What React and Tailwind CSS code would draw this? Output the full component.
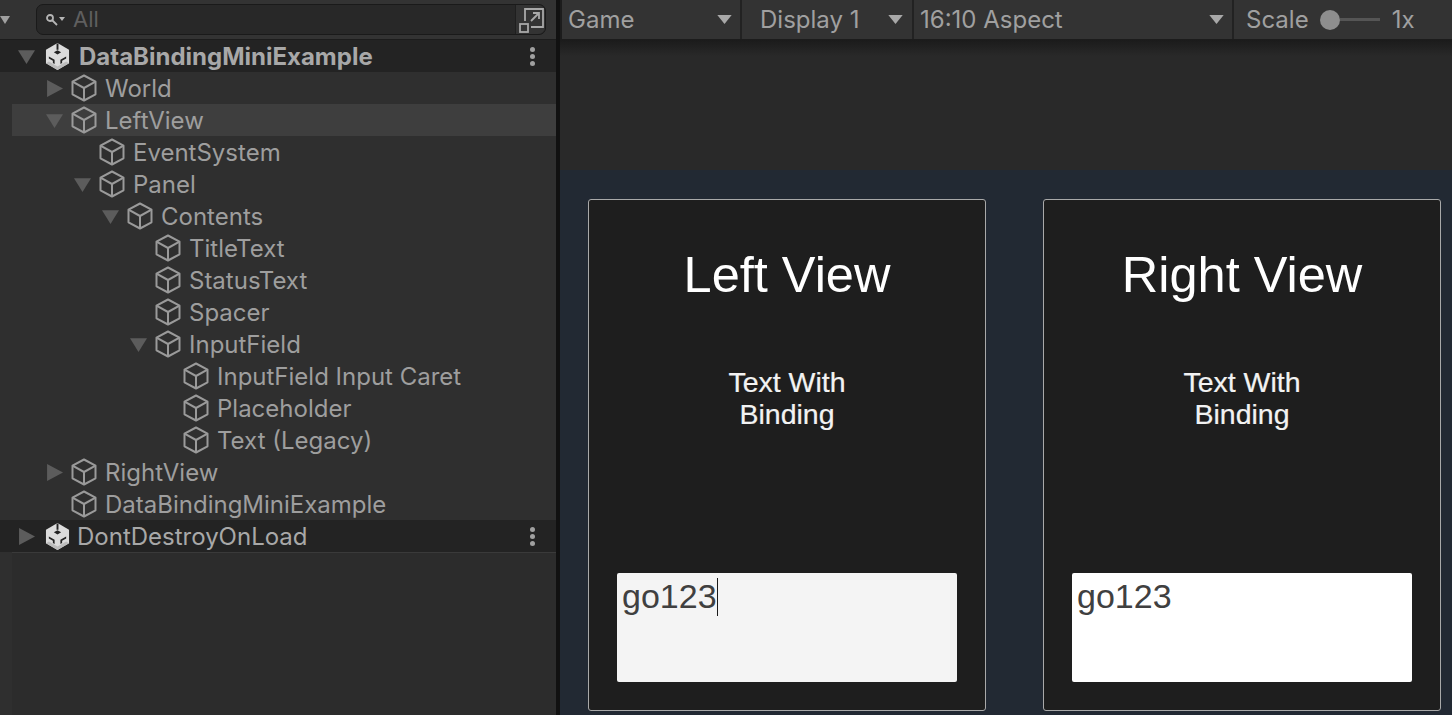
const rows = [
  { name: 'World', depth: 1, arrow: 'right' },
  { name: 'LeftView', depth: 1, arrow: 'down', active: true },
  { name: 'EventSystem', depth: 2 },
  { name: 'Panel', depth: 2, arrow: 'down' },
  { name: 'Contents', depth: 3, arrow: 'down' },
  { name: 'TitleText', depth: 4 },
  { name: 'StatusText', depth: 4 },
  { name: 'Spacer', depth: 4 },
  { name: 'InputField', depth: 4, arrow: 'down' },
  { name: 'InputField Input Caret', depth: 5 },
  { name: 'Placeholder', depth: 5 },
  { name: 'Text (Legacy)', depth: 5 },
  { name: 'RightView', depth: 1, arrow: 'right' },
  { name: 'DataBindingMiniExample', depth: 1 },
];

const Arrow = ({ dir }) => (
  <svg viewBox="0 0 16 16" className="w-[17px] h-[17px] shrink-0" fill="#5c5c5c">
    {dir === 'down' ? <path d="M0 2h16L8 15z" /> : <path d="M1 0l15 8-15 8z" />}
  </svg>
);

const Cube = () => (
  <svg viewBox="0 0 26 28" className="w-[26px] h-[28px] shrink-0" fill="none" stroke="#9a9a9a" strokeWidth="2" strokeLinejoin="round">
    <path d="M13 1.5l11.5 6.2v12.6L13 26.5 1.5 20.3V7.7z" />
    <path d="M1.5 7.7L13 14l11.5-6.3M13 14v12.5" />
  </svg>
);

const UnityLogo = () => (
  <svg viewBox="0 0 26 28" className="w-[25px] h-[27px] shrink-0">
    <path fill="#dcdcdc" d="M13 0l12 7v14l-12 7-12-7V7z" />
    <path fill="#bcbcbc" d="M1 21l12 7 12-7-3-1.8-9 5.2-9-5.2z" />
    <path fill="#232323" d="M13 7.5l3.8 2.2L13 12 9.2 9.7zM4 14l6 3.5v4.3l-1.8-1v-2.4L4 16zM22 14l-6 3.5v4.3l1.8-1v-2.4L22 16z" />
    <path fill="#232323" d="M12 0.5h2v6.5h-2z" />
  </svg>
);

const Kebab = () => (
  <div className="ml-auto mr-[21px] flex flex-col gap-[2px]">
    <span className="w-[5px] h-[5px] rounded-full bg-[#a0a0a0]" />
    <span className="w-[5px] h-[5px] rounded-full bg-[#a0a0a0]" />
    <span className="w-[5px] h-[5px] rounded-full bg-[#a0a0a0]" />
  </div>
);

const Caret = () => (
  <svg viewBox="0 0 16 10" className="w-[15px] h-[9px] shrink-0" fill="#a8a8a8">
    <path d="M0 0h16L8 10z" />
  </svg>
);

const SceneRow = ({ name, dir, bold }) => (
  <div className="h-[32px] flex items-center bg-[#232323] pl-[18px]">
    <div className="w-[27px] shrink-0"><Arrow dir={dir} /></div>
    <UnityLogo />
    <span className={`${bold ? 'ml-[9px] font-bold' : 'ml-[7px]'} pt-[1px] text-[24px] text-[#a8a8a8]`}>{name}</span>
    <Kebab />
  </div>
);

const TreeRow = ({ name, depth, arrow, active }) => (
  <div className={`h-[32px] flex items-center ml-[12px] ${active ? 'bg-[#3e3e3e]' : ''}`}>
    <div className="flex items-center w-[25px] shrink-0" style={{ marginLeft: depth * 28 + 6 }}>
      {arrow && <Arrow dir={arrow} />}
    </div>
    <Cube />
    <span className="ml-[8px] pt-[1px] text-[24px] text-[#9e9e9e] whitespace-nowrap">{name}</span>
  </div>
);

const GameCard = ({ title, caret, inputBg }) => (
  <div className="w-[398px] h-[512px] shrink-0 border border-[#a9a9a9] rounded-[3px] bg-[#1e1e1e] flex flex-col items-center px-[28px] pb-[28px] pt-[45px] font-['Liberation_Sans',sans-serif] text-white">
    <div className="text-[50.5px] leading-[60px]">{title}</div>
    <div className="mt-[61px] text-[28.5px] leading-[32px] text-center text-[#f2f2f2] [-webkit-text-stroke:0.2px_white]">
      Text With<br />Binding
    </div>
    <div className={`mt-auto w-full h-[109px] rounded-[2px] ${inputBg} px-[5px] text-[34px] leading-[46px] text-[#404040] flex items-start`}>
      <span>go123</span>
      {caret && <span className="w-[1px] h-[38px] mt-[5px] bg-[#1a1a1a]" />}
    </div>
  </div>
);

export default function App() {
  return (
    <div className="w-[1452px] h-[715px] overflow-hidden flex bg-[#2a2a2a] font-['Inter',sans-serif]">
      {/* hierarchy */}
      <div className="w-[556px] shrink-0 flex flex-col bg-[#2f2f2f]">
        <div className="h-[40px] shrink-0 flex items-center bg-[#333333] border-b border-[#1c1c1c]">
          <div className="w-[36px] shrink-0"><svg viewBox="0 0 10 8" className="w-[10px] h-[8px]" fill="#a0a0a0"><path d="M0 0h10L5 8z" /></svg></div>
          <div className="w-[510px] h-[31px] rounded-[7px] border border-[#1a1a1a] bg-[#282828] flex items-center">
            <div className="flex items-center pl-[8px] w-[36px]">
              <svg viewBox="0 0 20 14" className="w-[20px] h-[14px]" fill="none" stroke="#b5b5b5" strokeWidth="1.8">
                <circle cx="5" cy="5" r="3" />
                <path d="M7.5 7.5L12 12" />
                <path d="M14 4h6l-3 4z" fill="#b5b5b5" stroke="none" />
              </svg>
            </div>
            <span className="text-[22px] text-[#5f5f5f]">All</span>
            <div className="ml-auto h-full w-[30px] border-l border-[#1f1f1f] bg-[#333333] rounded-r-[7px] flex items-center justify-center">
              <svg viewBox="0 0 26 26" className="w-[26px] h-[26px] translate-x-[1px]" fill="none" stroke="#a8a8a8" strokeWidth="1.8">
                <path d="M6 14V2h18v18H12" />
                <path d="M12 14l8-8M14 6h6v6" />
                <rect x="1" y="17" width="8" height="8" />
              </svg>
            </div>
          </div>
        </div>
        <SceneRow name="DataBindingMiniExample" dir="down" bold />
        {rows.map(r => <TreeRow key={r.name + r.depth} {...r} />)}
        <SceneRow name="DontDestroyOnLoad" dir="right" />
        <div className="flex-1 ml-[12px] border-t border-[#3a3a3a] bg-[#2c2c2c]" />
      </div>
      <div className="w-[4px] shrink-0 bg-[#111111]" />
      {/* game view */}
      <div className="flex-1 flex flex-col min-w-0 overflow-hidden">
        <div className="h-[40px] shrink-0 flex items-center bg-[#333333] border-b border-[#1c1c1c] border-l-2 border-l-[#1c1c1c] text-[24px] text-[#a0a0a0]">
          <div className="w-[180px] h-full flex items-center justify-between pl-[6px] pr-[8px] border-r-2 border-[#222222]"><span>Game</span><Caret /></div>
          <div className="w-[172px] h-full flex items-center justify-between pl-[18px] pr-[9px] border-r-2 border-[#222222]"><span>Display 1</span><Caret /></div>
          <div className="w-[320px] h-full flex items-center justify-between pl-[6px] pr-[8px] border-r-2 border-[#222222]"><span>16:10 Aspect</span><Caret /></div>
          <div className="flex-1 h-full flex items-center pl-[12px]">
            <span>Scale</span>
            <div className="ml-[11px] w-[60px] flex items-center">
              <span className="w-[20px] h-[20px] rounded-full bg-[#8e8e8e]" />
              <span className="flex-1 h-[3px] bg-[#555555]" />
            </div>
            <span className="ml-[12px]">1x</span>
          </div>
        </div>
        <div className="h-[130px] shrink-0 bg-[#292929] bg-[linear-gradient(to_bottom,#1b1b1b,#292929_16px)]" />
        <div className="flex-1 bg-[#222933] flex gap-[57px] pl-[28px] pt-[29px]">
          <GameCard title="Left View" caret inputBg="bg-[#f4f4f4]" />
          <GameCard title="Right View" inputBg="bg-white" />
        </div>
      </div>
    </div>
  );
}
